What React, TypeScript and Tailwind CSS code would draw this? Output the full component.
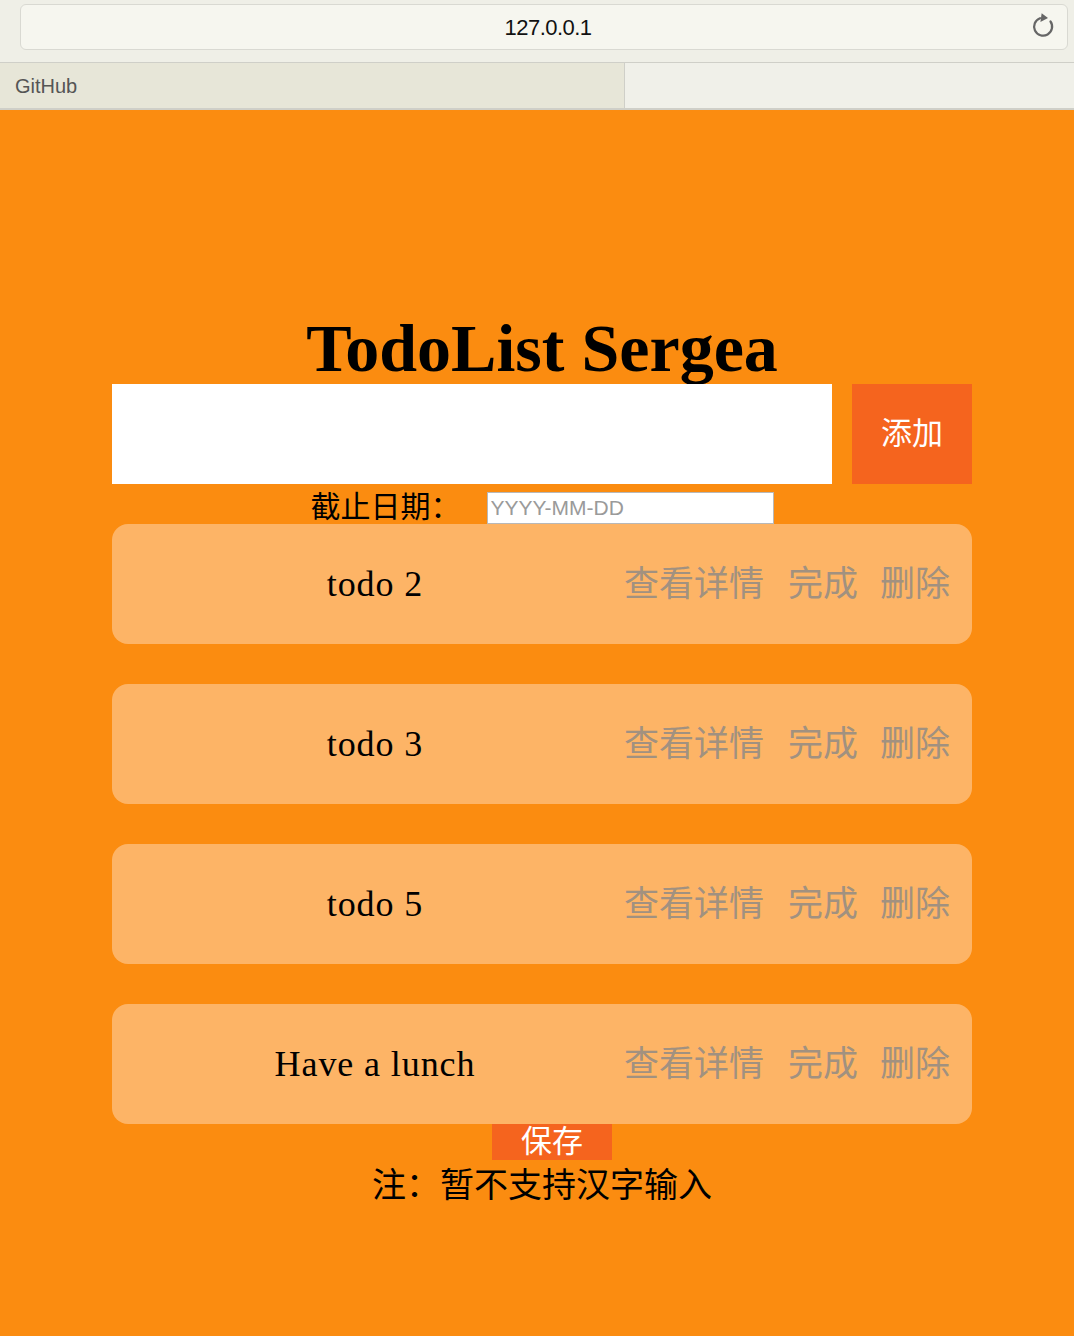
import { useState } from 'react'

interface Todo {
  id: number
  title: string
}

const initialTodos: Todo[] = [
  { id: 2, title: 'todo 2' },
  { id: 3, title: 'todo 3' },
  { id: 5, title: 'todo 5' },
  { id: 6, title: 'Have a lunch' },
]

const serif = "font-['Liberation_Serif','Noto_Sans_CJK_SC',serif]"
const sans = "font-['Liberation_Sans','Noto_Sans_CJK_SC',sans-serif]"

function ReloadIcon() {
  return (
    <svg width="26" height="28" viewBox="0 0 26 28" fill="none">
      <path d="M19.5 9.5 A9 9 0 1 1 9 6.2" stroke="#666" strokeWidth="2.2" strokeLinecap="round" fill="none" />
      <path d="M8 1.5 L15 5.5 L8 10.5 Z" fill="#666" transform="translate(2 0) rotate(8 11 6)" />
    </svg>
  )
}

function BrowserChrome() {
  return (
    <div className={sans}>
      {/* address bar */}
      <div className="h-[62px] bg-[#efefe7] pl-5 pr-[6px] pt-1">
        <div className="relative flex h-[46px] items-center justify-center rounded-md border border-[#d9d9d2] bg-[#f6f6ef]">
          <span className="pl-[8px] text-[22px] tracking-tight text-[#111]">127.0.0.1</span>
          <div className="absolute right-[10px] top-[7px]">
            <ReloadIcon />
          </div>
        </div>
      </div>
      {/* bookmarks bar */}
      <div className="flex h-[48px] border-t border-b-2 border-[#cfcfc8] bg-[#f0f0e9]">
        <div className="flex w-[625px] items-center border-r border-[#cfcfc8] bg-[#e7e6d8] pl-[15px]">
          <span className="text-[20px] text-[#555]">GitHub</span>
        </div>
        <div className="flex-1" />
      </div>
    </div>
  )
}

function TodoRow({ todo }: { todo: Todo }) {
  return (
    <div className="flex h-[120px] items-center rounded-2xl bg-[#fdb466] pr-[22px]">
      <div className={`${serif} flex-1 pl-[14px] text-center text-[36px] tracking-wide text-black`}>{todo.title}</div>
      <div className={`${sans} flex items-center text-[35px] text-[#a19180]`}>
        <span>查看详情</span>
        <span className="ml-[24px]">完成</span>
        <span className="ml-[22px]">删除</span>
      </div>
    </div>
  )
}

export default function App() {
  const [todos] = useState<Todo[]>(initialTodos)

  return (
    <div className="min-h-screen w-[1074px] bg-[#fb8c10]">
      <BrowserChrome />

      <div className="ml-[112px] w-[860px] pt-[202px] pb-[130px]">
        <h1 className={`${serif} h-[72px] text-center text-[68px] font-bold leading-[72px] text-black`}>TodoList Sergea</h1>

        <div className="flex gap-5">
          <input className="h-[100px] w-[720px] bg-white px-4 text-2xl outline-none" />
          <button className={`${sans} h-[100px] w-[120px] bg-[#f5641e] text-[31px] text-white`}>添加</button>
        </div>

        <div className="flex h-[40px] items-end justify-center gap-[26px]">
          <span className={`${serif} text-[30px] leading-[34px] text-black`}>截止日期：</span>
          <input
            placeholder="YYYY-MM-DD"
            className={`${sans} h-[32px] w-[287px] border border-[#b8b8b8] bg-white px-[3px] text-[21px] placeholder:text-[#9a9a9a] outline-none`}
          />
        </div>

        <div className="flex flex-col gap-10">
          {todos.map((todo) => (
            <TodoRow key={todo.id} todo={todo} />
          ))}
        </div>

        <div className="flex justify-center pl-5">
          <button className={`${sans} h-[36px] w-[120px] bg-[#f5641e] text-[31px] leading-[36px] text-white`}>保存</button>
        </div>

        <p className={`${serif} mt-[6px] text-center text-[34px] leading-[40px] text-black`}>注：暂不支持汉字输入</p>
      </div>
    </div>
  )
}
